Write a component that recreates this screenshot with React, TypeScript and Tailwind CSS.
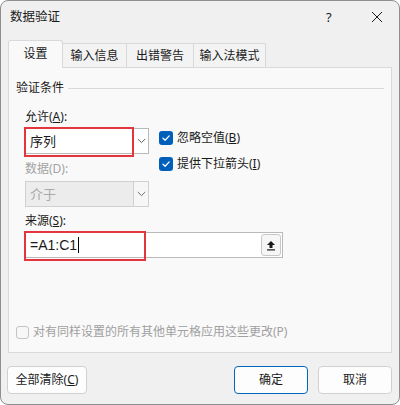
import React from 'react';

function Check() {
  return (
    <span className="w-[14px] h-[14px] rounded-[3px] bg-[#005fb8] flex items-center justify-center shrink-0">
      <svg width="10" height="10" viewBox="0 0 10 10" fill="none">
        <path d="M2 5.2 L4.1 7.2 L8.2 2.9" stroke="white" strokeWidth="1.3" strokeLinecap="round" strokeLinejoin="round" />
      </svg>
    </span>
  );
}

function Chevron({ color = '#606060' }: { color?: string }) {
  return (
    <svg width="9" height="6" viewBox="0 0 9 6" fill="none">
      <path d="M0.8 1 L4.5 4.6 L8.2 1" stroke={color} strokeWidth="1" />
    </svg>
  );
}

export default function App() {
  return (
    <div className="w-[400px] h-[405px] bg-white">
      <div className="w-[400px] h-[405px] rounded-lg border border-[#8f8f8f] bg-[#f0f0f0] flex flex-col overflow-hidden font-['Noto_Sans','Noto_Sans_CJK_SC',sans-serif] text-[12px] leading-[16px] text-[#1a1a1a]">
        {/* title bar */}
        <div className="h-[31px] flex items-center pl-[9px] shrink-0">
          <span className="flex-1 text-[12.5px]">数据验证</span>
          <span className="w-[10px] text-[13px] mr-[35px]">?</span>
          <svg width="12" height="12" viewBox="0 0 12 12" className="mr-[16px]">
            <path d="M1 1 L11 11 M11 1 L1 11" stroke="#1a1a1a" strokeWidth="1" />
          </svg>
        </div>

        {/* tabs */}
        <div className="mt-[8px] h-[28px] flex items-end ml-[7px] shrink-0">
          <div className="relative z-10 w-[55px] h-[28px] bg-[#f9f9f9] border border-b-0 border-[#d9d9d9] rounded-t-[3px] flex items-center justify-center pb-[1px]">
            设置
          </div>
          <div className="w-[64px] h-[25px] bg-[#f3f3f3] border-t border-r border-[#d9d9d9] flex items-center justify-center">
            输入信息
          </div>
          <div className="w-[67px] h-[25px] bg-[#f3f3f3] border-t border-r border-[#d9d9d9] flex items-center justify-center">
            出错警告
          </div>
          <div className="w-[72px] h-[25px] bg-[#f3f3f3] border-t border-r border-[#d9d9d9] flex items-center justify-center">
            输入法模式
          </div>
        </div>

        {/* panel */}
        <div className="-mt-px ml-[7px] w-[384px] h-[286px] bg-[#f9f9f9] border border-[#d9d9d9] flex flex-col shrink-0">
          <div className="pt-[12px] h-[28px] flex items-end pl-[7px] pr-[7px]">
            <div className="h-[16px] flex items-center w-full">
              <span>验证条件</span>
              <span className="flex-1 h-px bg-[#d9d9d9] ml-[4px]" />
            </div>
          </div>

          <div className="pl-[16px] mt-[13px] flex">
            <div className="w-[124px] flex flex-col">
              <span className="h-[16px]">允许(<u>A</u>):</span>
              <div className="relative mt-[3px] h-[26px] flex border border-[#b9b9b9] bg-white">
                <span className="flex-1 flex items-center pl-[4px] text-[13px]">序列</span>
                <span className="w-[15px] border-l border-[#d0d0d0] flex items-center justify-center">
                  <Chevron />
                </span>
                <span className="absolute -left-[2px] -top-[2px] w-[110px] h-[30px] border-2 border-[#e3353d]" />
              </div>
              <span className="h-[16px] mt-[7px] text-[#a3a3a3]">数据(D):</span>
              <div className="mt-[4px] h-[26px] flex border border-[#d0d0d0] bg-[#ececec]">
                <span className="flex-1 flex items-center pl-[4px] text-[13px] text-[#a8a8a8]">介于</span>
                <span className="w-[15px] border-l border-[#d0d0d0] bg-[#f6f6f6] flex items-center justify-center">
                  <Chevron color="#707070" />
                </span>
              </div>
            </div>
            <div className="ml-[10px] pt-[22px] flex flex-col gap-[12px]">
              <div className="flex items-center gap-[4px] h-[14px]">
                <Check />
                <span>忽略空值(<u>B</u>)</span>
              </div>
              <div className="flex items-center gap-[4px] h-[14px]">
                <Check />
                <span>提供下拉箭头(<u>I</u>)</span>
              </div>
            </div>
          </div>

          <div className="pl-[16px] mt-[6px] flex flex-col">
            <span className="h-[16px]">来源(<u>S</u>):</span>
            <div className="relative mt-[3px] w-[258px] h-[26px] flex items-center border border-[#b9b9b9] bg-white">
              <span className="flex-1 flex items-center pl-[4px] text-[14px] font-['Liberation_Sans',sans-serif]">
                =A1:C1
                <span className="ml-[1px] w-px h-[16px] bg-black" />
              </span>
              <span className="mr-[1px] w-[20px] h-[22px] rounded-[3px] border border-[#c8c8c8] bg-[#f6f6f6] flex items-center justify-center">
                <svg width="10" height="11" viewBox="0 0 10 11">
                  <path d="M5 1 L9 5 L6.5 5 L6.5 8 L3.5 8 L3.5 5 L1 5 Z" fill="#1a1a1a" />
                  <rect x="1" y="9.3" width="8" height="1.2" fill="#1a1a1a" />
                </svg>
              </span>
              <span className="absolute -left-[2px] -top-[2px] w-[122px] h-[30px] border-2 border-[#e3353d]" />
            </div>
          </div>

          <div className="mt-auto mb-[12px] pl-[7px] flex items-center gap-[4px] h-[16px]">
            <span className="w-[13px] h-[13px] rounded-[3px] border border-[#c4c4c4] bg-[#f7f7f7]" />
            <span className="text-[#a0a0a0]">对有同样设置的所有其他单元格应用这些更改(P)</span>
          </div>
        </div>

        {/* buttons */}
        <div className="mt-[13px] flex items-center pl-[6px] pr-[7px]">
          <button className="w-[80px] h-[28px] rounded-[4px] border border-[#d0d0d0] bg-[#fdfdfd]">
            全部清除(<u>C</u>)
          </button>
          <span className="flex-1" />
          <button className="w-[74px] h-[28px] rounded-[4px] border border-[#0067c0] bg-[#fdfdfd]">
            确定
          </button>
          <button className="ml-[10px] w-[74px] h-[28px] rounded-[4px] border border-[#d0d0d0] bg-[#fdfdfd]">
            取消
          </button>
        </div>
      </div>
    </div>
  );
}
